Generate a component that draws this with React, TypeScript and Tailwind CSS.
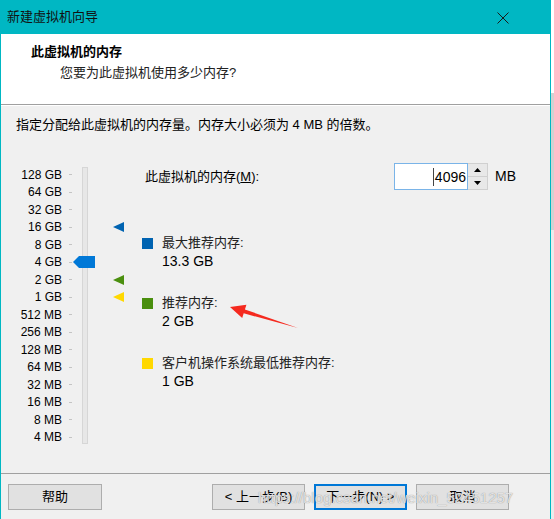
import { FC } from 'react'

const sizes = [
  '128 GB', '64 GB', '32 GB', '16 GB', '8 GB', '4 GB', '2 GB', '1 GB',
  '512 MB', '256 MB', '128 MB', '64 MB', '32 MB', '16 MB', '8 MB', '4 MB',
]

// marker colours by row index
const markers: Record<number, string> = {
  3: '#0063b1',
  6: '#4a8f0e',
  7: '#ffd800',
}

const Slider: FC = () => (
  <div className="relative flex mt-[3px]">
    <div className="flex flex-col">
      {sizes.map((s) => (
        <div key={s} className="flex items-center h-[17.5px]">
          <span className="w-[61px] text-right text-[12px] leading-none text-black">{s}</span>
          <span className="ml-[7px] w-[3px] h-px bg-[#c4c4c4]" />
        </div>
      ))}
    </div>
    <div className="ml-[10px] mt-[1px] w-[6px] h-[277px] bg-[#e7e7e7] border border-[#d6d6d6]" />
    <div className="flex flex-col ml-[25px]">
      {sizes.map((s, i) => (
        <div key={s} className="flex items-center h-[17.5px]">
          {markers[i] ? (
            <svg width="11" height="10" viewBox="0 0 11 10">
              <polygon points="0,5 11,0 11,10" fill={markers[i]} />
            </svg>
          ) : (
            <span className="w-[11px]" />
          )}
        </div>
      ))}
    </div>
    {/* slider thumb */}
    <svg className="absolute left-[72px] top-[90px]" width="22" height="12" viewBox="0 0 22 12">
      <polygon points="0,6 6,0 22,0 22,12 6,12" fill="#0078d7" />
    </svg>
  </div>
)

const Legend: FC<{ color: string; label: string; value: string; mt: string }> = ({ color, label, value, mt }) => (
  <div className={`flex items-start ${mt}`}>
    <span className="mt-[4px] w-[11px] h-[11px] shrink-0" style={{ background: color }} />
    <div className="ml-[9px] flex flex-col">
      <span className="text-[13px] leading-[18px] text-[#222]">{label}</span>
      <span className="text-[14px] leading-[18px] text-black">{value}</span>
    </div>
  </div>
)

const Button: FC<{ label: string; focused?: boolean; className?: string }> = ({ label, focused, className }) => (
  <button
    className={`h-[26px] w-[93px] bg-[#e1e1e1] text-[13px] text-black border ${
      focused ? 'border-[#0078d7] outline outline-1 outline-[#0078d7] -outline-offset-2' : 'border-[#adadad]'
    } ${className ?? ''}`}
  >
    {label}
  </button>
)

export default function App() {
  return (
    <div className="relative flex w-[554px] h-[519px] font-['Liberation_Sans','Noto_Sans_CJK_SC',sans-serif] bg-[#f0f0f0]">
      <div className="flex flex-col w-[551px] h-full border-x border-[#00b7c3]">
        {/* title bar */}
        <div className="flex items-center justify-between h-[34px] bg-[#00b7c3] pl-[7px] pr-[42px] -mx-px">
          <span className="text-[13px] text-[#111]">新建虚拟机向导</span>
          <svg width="12" height="12" viewBox="0 0 12 12" className="mt-px">
            <path d="M0.5 0.5L11.5 11.5M11.5 0.5L0.5 11.5" stroke="#1a1a1a" strokeWidth="1" />
          </svg>
        </div>

        {/* header */}
        <div className="flex flex-col h-[71px] bg-white border-b border-[#a0a0a0] pt-[10px]">
          <span className="pl-[30px] text-[13px] leading-4 font-bold text-black">此虚拟机的内存</span>
          <span className="pl-[59px] mt-[5px] text-[13px] leading-4 text-[#222]">您要为此虚拟机使用多少内存?</span>
        </div>
        <div className="h-px bg-white" />

        {/* body */}
        <div className="flex-1 flex flex-col">
          <p className="pl-[15px] pt-[11px] text-[13px] leading-4 text-black">
            指定分配给此虚拟机的内存量。内存大小必须为 4 MB 的倍数。
          </p>
          <div className="flex mt-[30px]">
            <Slider />
            <div className="ml-[18px] flex flex-col">
              <div className="flex items-center h-[27px]">
                <span className="w-[252px] pl-[3px] text-[13px] text-black">
                  此虚拟机的内存(<span className="underline">M</span>):
                </span>
                <div className="flex items-center justify-end w-[74px] h-[27px] bg-white border border-[#7ab4e8] pr-[1px]">
                  <span className="w-px h-[18px] bg-[#444] mr-px" />
                  <span className="text-[14px] text-black leading-none">4096</span>
                </div>
                <div className="flex flex-col w-[20px] h-[27px] border border-l-0 border-[#d0d0d0] bg-[#e8e8e8]">
                  <div className="flex-1 flex items-center justify-center border-b border-[#d0d0d0]">
                    <svg width="7" height="4" viewBox="0 0 7 4"><polygon points="0,4 3.5,0 7,4" fill="#000" /></svg>
                  </div>
                  <div className="flex-1 flex items-center justify-center">
                    <svg width="7" height="4" viewBox="0 0 7 4"><polygon points="0,0 7,0 3.5,4" fill="#000" /></svg>
                  </div>
                </div>
                <span className="ml-[7px] text-[14px] text-black">MB</span>
              </div>
              <Legend color="#0063b1" label="最大推荐内存:" value="13.3 GB" mt="mt-[44px]" />
              <Legend color="#4a8f0e" label="推荐内存:" value="2 GB" mt="mt-[24px]" />
              <Legend color="#ffd800" label="客户机操作系统最低推荐内存:" value="1 GB" mt="mt-[24px]" />
            </div>
          </div>
        </div>

        {/* footer */}
        <div className="flex h-[46px] border-t border-[#a0a0a0] pt-[10px]">
          <Button label="帮助" className="ml-[7px] w-[94px]" />
          <Button label="< 上一步(B)" className="ml-[110px]" />
          <Button label="下一步(N) >" focused className="ml-[9px]" />
          <Button label="取消" className="ml-[9px]" />
        </div>
      </div>

      {/* area outside the window */}
      <div className="flex flex-col w-[3px]">
        <div className="h-[93px] bg-white" />
        <div className="h-[137px] bg-[#d2d2d2]" />
        <div className="flex-1 bg-[#ececec]" />
      </div>

      {/* red annotation arrow */}
      <svg className="absolute left-0 top-0 pointer-events-none" width="554" height="519">
        <polygon
          points="230,307 246.4,304.7 244.9,309.5 298,328 243.7,313.3 242.2,318.1"
          fill="#f52a1f"
        />
      </svg>

      {/* watermark */}
      <span className="absolute left-[258px] top-[487px] text-[15px] text-white/75 [text-shadow:0_0_1px_#777] pointer-events-none">
        https://blog.csdn.net/weixin_52451257
      </span>
    </div>
  )
}
